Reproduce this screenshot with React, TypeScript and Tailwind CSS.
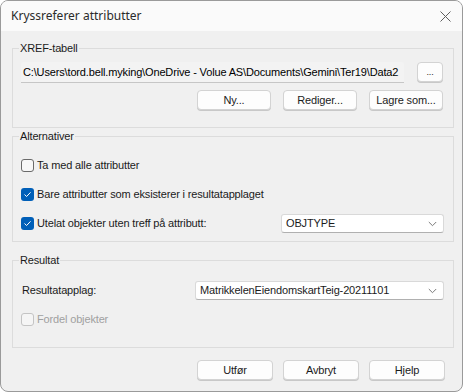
import React from "react";

const font = { fontFamily: '"Liberation Sans", Arial, sans-serif', letterSpacing: "-0.15px" };

function Btn({ children, w = "w-[74px]" }: { children: React.ReactNode; w?: string }) {
  return (
    <div
      className={`${w} h-[20px] flex items-center justify-center bg-[#fdfdfd] border border-[#d3d3d3] rounded-[4px] text-[11px] text-[#1b1b1b] shadow-[0_1px_0_#c8c8c8]`}
    >
      {children}
    </div>
  );
}

function Check({ checked, disabled }: { checked?: boolean; disabled?: boolean }) {
  if (checked) {
    return (
      <div className="w-[13px] h-[13px] rounded-[3px] bg-[#005fb8] flex items-center justify-center shrink-0">
        <svg width="9" height="9" viewBox="0 0 9 9" fill="none">
          <path d="M1.8 4.8 L3.6 6.5 L7.3 2.6" stroke="white" strokeWidth="1" strokeLinecap="round" strokeLinejoin="round" />
        </svg>
      </div>
    );
  }
  return (
    <div
      className={`w-[13px] h-[13px] rounded-[3px] border shrink-0 ${
        disabled ? "border-[#c4c4c4] bg-[#f5f5f5]" : "border-[#6a6a6a] bg-[#f7f7f7]"
      }`}
    />
  );
}

function Chevron() {
  return (
    <svg width="9" height="6" viewBox="0 0 9 6" fill="none">
      <path d="M0.8 1 L4.5 4.7 L8.2 1" stroke="#7a7a7a" strokeWidth="1" />
    </svg>
  );
}

function Combo({ text, w }: { text: string; w: string }) {
  return (
    <div
      className={`${w} h-[19px] bg-white border border-[#d9d9d9] border-b-[#b0b0b0] rounded-[3px] flex items-center justify-between pl-[4px] pr-[6px] text-[11px] text-[#1b1b1b]`}
    >
      <span>{text}</span>
      <Chevron />
    </div>
  );
}

function Group({ label, children, className = "" }: { label: string; children: React.ReactNode; className?: string }) {
  return (
    <fieldset className={`border border-[#dcdcdc] w-[442px] ${className}`}>
      <legend className="ml-[6px] px-[1px] text-[11px] leading-[14px] text-[#1b1b1b]">{label}</legend>
      {children}
    </fieldset>
  );
}

export default function App() {
  return (
    <div className="w-[463px] h-[392px] bg-white" style={font}>
      <div className="w-[463px] h-[392px] bg-[#f0f0f0] border border-[#9a9a9a] rounded-[8px] overflow-hidden flex flex-col">
        <div className="h-[30px] bg-[#fafafa] flex items-center justify-between pl-[10px] pr-[10px] shrink-0">
          <span
            className="text-[12px] text-[#2a2a2a]"
            style={{ fontFamily: '"Noto Sans", "Open Sans", sans-serif', letterSpacing: "0px" }}
          >
            Kryssreferer attributter
          </span>
          <svg width="11" height="11" viewBox="0 0 11 11" className="mr-[1px]">
            <path d="M0.5 0.5 L10.5 10.5 M10.5 0.5 L0.5 10.5" stroke="#5f5f5f" strokeWidth="1" />
          </svg>
        </div>
        <div className="pl-[11px] pt-[10px] flex flex-col">
          <Group label="XREF-tabell">
            <div className="pl-[8px] pr-[10px] pt-[7px] pb-[17px] flex flex-col">
              <div className="flex items-start justify-between">
                <div className="w-[383px] h-[21px] bg-[#f3f3f3] border-b border-[#c6c6c6] rounded-t-[2px] flex items-center pl-[2px] text-[11px] text-black whitespace-nowrap overflow-hidden">
                  C:\Users\tord.bell.myking\OneDrive - Volue AS\Documents\Gemini\Ter19\Data2
                </div>
                <Btn w="w-[26px]">
                  <span className="text-[9px] leading-none">...</span>
                </Btn>
              </div>
              <div className="flex justify-end gap-[12px] mt-[7px]">
                <Btn>Ny...</Btn>
                <Btn>Rediger...</Btn>
                <Btn>Lagre som...</Btn>
              </div>
            </div>
          </Group>
          <Group label="Alternativer" className="mt-[1px]">
            <div className="pl-[8px] pr-[9px] pt-[16px] pb-[11px] flex flex-col gap-[16px] text-[11px] text-[#1b1b1b]">
              <div className="flex items-center gap-[3px] h-[13px]">
                <Check />
                <span>Ta med alle attributter</span>
              </div>
              <div className="flex items-center gap-[3px] h-[13px]">
                <Check checked />
                <span>Bare attributter som eksisterer i resultatapplaget</span>
              </div>
              <div className="flex items-center justify-between h-[13px]">
                <div className="flex items-center gap-[3px]">
                  <Check checked />
                  <span>Utelat objekter uten treff på attributt:</span>
                </div>
                <Combo text="OBJTYPE" w="w-[163px]" />
              </div>
            </div>
          </Group>
          <Group label="Resultat" className="mt-[11px]">
            <div className="pl-[9px] pr-[9px] pt-[14px] pb-[21px] flex flex-col gap-[13px] text-[11px] text-[#1b1b1b]">
              <div className="flex items-center justify-between">
                <span>Resultatapplag:</span>
                <Combo text="MatrikkelenEiendomskartTeig-20211101" w="w-[249px]" />
              </div>
              <div className="flex items-center gap-[3px] h-[13px] -ml-[1px]">
                <Check disabled />
                <span className="text-[#a0a0a0]">Fordel objekter</span>
              </div>
            </div>
          </Group>
          <div className="flex justify-end gap-[10px] pr-[9px] mt-[12px] w-[442px]">
            <Btn w="w-[76px]">Utfør</Btn>
            <Btn w="w-[76px]">Avbryt</Btn>
            <Btn w="w-[76px]">Hjelp</Btn>
          </div>
        </div>
      </div>
    </div>
  );
}
